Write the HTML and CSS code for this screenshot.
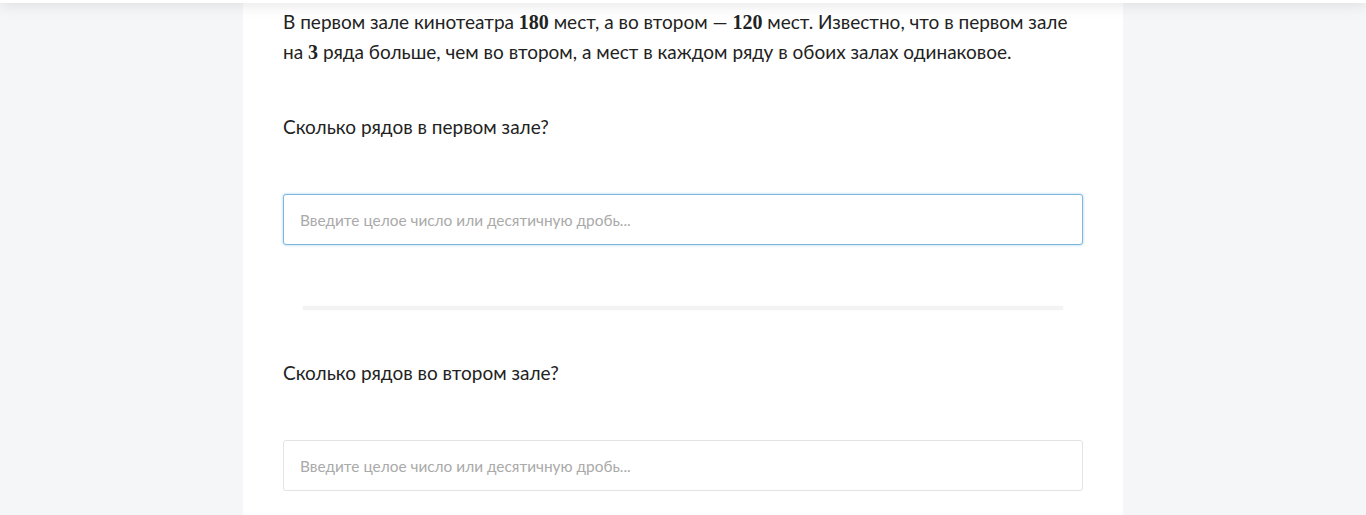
FILE: index.html
```html
<!DOCTYPE html>
<html lang="ru">
<head>
<meta charset="utf-8">
<link rel="stylesheet" href="styles.css">
</head>
<body>
<div class="topbar"></div>
<main class="card">
  <p class="task">В первом зале кинотеатра <span class="num">180</span> мест, а во втором — <span class="num">120</span> мест. Известно, что в первом зале на <span class="num">3</span> ряда больше, чем во втором, а мест в каждом ряду в обоих залах одинаковое.</p>
  <section class="q q1">
    <div class="q-title">Сколько рядов в первом зале?</div>
    <input class="answer focused" type="text" placeholder="Введите целое число или десятичную дробь..." autofocus>
  </section>
  <div class="divider"></div>
  <section class="q q2">
    <div class="q-title">Сколько рядов во втором зале?</div>
    <input class="answer" type="text" placeholder="Введите целое число или десятичную дробь...">
  </section>
</main>
</body>
</html>
```
FILE: styles.css
```css
html, body { margin: 0; padding: 0; }
body {
  background: #f4f6f8;
  font-family: "Lato", "Noto Sans", sans-serif;
  color: #222;
  overflow: hidden;
}
.topbar {
  position: fixed;
  top: -60px;
  left: 0;
  right: 0;
  height: 63px;
  background: #fff;
  box-shadow: 0 2px 14px rgba(0,0,0,0.10);
  z-index: 10;
}
.card {
  width: 800px;
  margin: 0 auto;
  padding: 7px 40px 40px;
  background: #fff;
  min-height: 600px;
}
.task {
  margin: 0;
  font-size: 19px;
  line-height: 30px;
}
.num {
  font-family: "Liberation Serif", "DejaVu Serif", serif;
  font-weight: 700;
  font-size: 20px;
  line-height: 1;
}
.q1 { margin-top: 45px; }
.q-title {
  font-size: 19px;
  line-height: 30px;
}
.answer {
  display: block;
  box-sizing: border-box;
  width: 800px;
  height: 51px;
  margin-top: 52px;
  padding: 0 16px;
  border: 1px solid #e3e3e3;
  border-radius: 3px;
  background: #fff;
  font-family: "Lato", "Noto Sans", sans-serif;
  font-size: 15.4px;
  color: #333;
  outline: none;
}
.answer::placeholder { color: #aaa; }
.answer.focused {
  border-color: #7fb6d9;
  box-shadow: 0 0 3px rgba(102,175,233,0.6);
}
.divider {
  margin: 61px 20px 0;
  height: 4px;
  background: #f3f3f3;
  box-shadow: 0 0 2px rgba(0,0,0,0.05);
}
.q2 { margin-top: 48px; }
```
